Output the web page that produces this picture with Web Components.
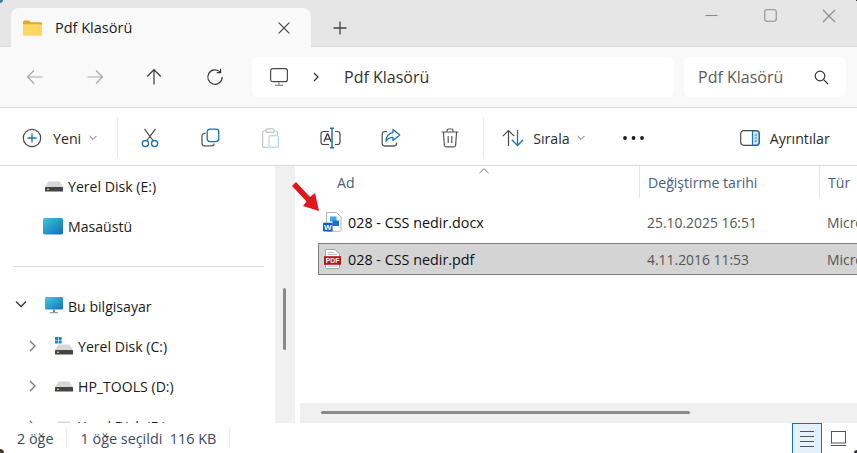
<!DOCTYPE html>
<html lang="tr">
<head>
<meta charset="utf-8">
<title>Pdf Klasörü</title>
<style>
  html, body { margin: 0; height: 100%; }
  body { width: 857px; height: 453px; overflow: hidden; font-family: "Open Sans", "Noto Sans", sans-serif; color: #1a1a1a; background: #fff; }
</style>
</head>
<body>
<explorer-window>
  <title-bar slot="top"></title-bar>
  <nav-bar slot="top"></nav-bar>
  <tool-bar slot="top"></tool-bar>
  <side-pane slot="left">
    <side-item icon="drive" indent="44">Yerel Disk (E:)</side-item>
    <side-item icon="desktop" indent="43" gap="5">Masaüstü</side-item>
    <side-divider></side-divider>
    <side-item icon="pc" indent="44" arrow="down" arrowx="15">Bu bilgisayar</side-item>
    <side-item icon="sysdrive" indent="54" arrow="right" arrowx="28">Yerel Disk (C:)</side-item>
    <side-item icon="drive" indent="54" arrow="right" arrowx="28">HP_TOOLS (D:)</side-item>
    <side-item icon="drive" indent="54" arrow="right" arrowx="28">Yerel Disk (E:)</side-item>
  </side-pane>
  <file-pane slot="right">
    <file-row icon="word" name="028 - CSS nedir.docx" date="25.10.2025 16:51" type="Microsoft Word Belgesi"></file-row>
    <file-row selected icon="pdf" name="028 - CSS nedir.pdf" date="4.11.2016 11:53" type="Microsoft Edge PDF"></file-row>
  </file-pane>
  <status-bar slot="bottom"></status-bar>
</explorer-window>

<script>
const ICONS = {
  back: '<svg width="18" height="18" viewBox="0 0 18 18" fill="none" stroke="#a9a9a9" stroke-width="1.2"><path d="M16.5 9H1.5M8 2.5 1.5 9 8 15.5"/></svg>',
  forward: '<svg width="18" height="18" viewBox="0 0 18 18" fill="none" stroke="#a9a9a9" stroke-width="1.2"><path d="M1.5 9h15M10 2.5 16.5 9 10 15.5"/></svg>',
  up: '<svg width="18" height="18" viewBox="0 0 18 18" fill="none" stroke="#3a3a3a" stroke-width="1.2"><path d="M9 16.5v-15M2.2 8.5 9 1.5l6.8 7"/></svg>',
  refresh: '<svg width="18" height="18" viewBox="0 0 18 18" fill="none" stroke="#3a3a3a" stroke-width="1.2"><path d="M14.3 4.2A7.2 7.2 0 1 0 16.2 9M14.6 .8v3.8h-3.8"/></svg>',
  monitor: '<svg width="20" height="20" viewBox="0 0 20 20" fill="none" stroke="#4a4a4a" stroke-width="1.2"><rect x="1.6" y="1.6" width="16.8" height="13" rx="2.2"/><path d="M6 18.4h8M10 15v3" stroke="#8a8a8a"/></svg>',
  crumb: '<svg width="8" height="10" viewBox="0 0 8 10" fill="none" stroke="#2e2e2e" stroke-width="1.2"><path d="M2 1l4 4-4 4"/></svg>',
  search: '<svg width="15" height="15" viewBox="0 0 15 15" fill="none" stroke="#333" stroke-width="1.2"><circle cx="6" cy="6" r="4.8"/><path d="M9.6 9.6l4.4 4.4"/></svg>',
  folder: '<svg width="19" height="16" viewBox="0 0 19 16"><path d="M0 2a1.5 1.5 0 0 1 1.5-1.5h4.6L8 2.2h11V6H0z" fill="#e9a825"/><path d="M0 4.2h17.5A1.5 1.5 0 0 1 19 5.7v8.8a1.2 1.2 0 0 1-1.2 1.2H1.2A1.2 1.2 0 0 1 0 14.5z" fill="#fdd663"/></svg>',
  x: '<svg width="12" height="12" viewBox="0 0 12 12" fill="none" stroke="#3a3a3a" stroke-width="1.1"><path d="M.7.7l10.6 10.6M11.3.7.7 11.3"/></svg>',
  plus: '<svg width="14" height="14" viewBox="0 0 14 14" fill="none" stroke="#444" stroke-width="1.3"><path d="M7 .5v13M.5 7h13"/></svg>',
  min: '<svg width="13" height="13" viewBox="0 0 13 13" fill="none" stroke="#8a8a8a" stroke-width="1.1"><path d="M.5 6.5h12"/></svg>',
  max: '<svg width="13" height="13" viewBox="0 0 13 13" fill="none" stroke="#8a8a8a" stroke-width="1.1"><rect x=".8" y=".8" width="11.4" height="11.4" rx="1.6"/></svg>',
  close: '<svg width="14" height="14" viewBox="0 0 14 14" fill="none" stroke="#8a8a8a" stroke-width="1.1"><path d="M1 1l12 12M13 1 1 13"/></svg>',
  newItem: '<svg width="20" height="20" viewBox="0 0 20 20" fill="none"><circle cx="10" cy="10" r="8.7" stroke="#4a4a4a" stroke-width="1.2"/><path d="M10 5.5v9M5.5 10h9" stroke="#1a73b8" stroke-width="1.3"/></svg>',
  cut: '<svg width="20" height="20" viewBox="0 0 20 20" fill="none"><path d="M3.5 .8 12.4 13M14.5 .8 5.6 13" stroke="#4a4a4a" stroke-width="1.2"/><circle cx="4.4" cy="15.6" r="3.1" stroke="#1a73b8" stroke-width="1.3"/><circle cx="13.6" cy="15.6" r="3.1" stroke="#1a73b8" stroke-width="1.3"/></svg>',
  copy: '<svg width="20" height="20" viewBox="0 0 20 20" fill="none"><path d="M4.6 5.4H3.4A2.4 2.4 0 0 0 1 7.8v7.4a2.6 2.6 0 0 0 2.6 2.6h7.2a2.4 2.4 0 0 0 2.4-2.2" stroke="#5a5a5a" stroke-width="1.3"/><rect x="6.2" y="1.2" width="11.6" height="12.4" rx="2.8" stroke="#1a73b8" stroke-width="1.3"/></svg>',
  paste: '<svg width="20" height="20" viewBox="0 0 20 20" fill="none"><path d="M5 3H3.2A1.6 1.6 0 0 0 1.6 4.6v13.2a1.6 1.6 0 0 0 1.6 1.6H7" stroke="#c4c4c4" stroke-width="1.2"/><path d="M13 3h1.8a1.6 1.6 0 0 1 1.6 1.6V7" stroke="#c4c4c4" stroke-width="1.2"/><rect x="5" y=".8" width="8" height="3.6" rx="1.2" stroke="#c4c4c4" stroke-width="1.2"/><rect x="8" y="7.6" width="9.4" height="11.8" rx="1.6" stroke="#b5d3ea" stroke-width="1.2"/></svg>',
  rename: '<svg width="22" height="22" viewBox="0 0 22 22" fill="none"><path d="M9 4.5H3.5A2.5 2.5 0 0 0 1 7v8a2.5 2.5 0 0 0 2.5 2.5H9M15 4.5h2.5A2.5 2.5 0 0 1 20 7v8a2.5 2.5 0 0 1-2.5 2.5H15" stroke="#4a4a4a" stroke-width="1.2"/><path d="M4 14.8 7.3 7h.6l3.2 7.8M5.1 12.2h5" stroke="#3a3a3a" stroke-width="1.3"/><path d="M10 1.2h4M12 1.2v19.6M10 20.8h4" stroke="#1a73b8" stroke-width="1.5"/></svg>',
  share: '<svg width="20" height="20" viewBox="0 0 20 20" fill="none"><path d="M6 3.6H3.6A2.4 2.4 0 0 0 1.2 6v9.6A2.4 2.4 0 0 0 3.6 18h9.6a2.4 2.4 0 0 0 2.4-2.4v-1.2" stroke="#5a5a5a" stroke-width="1.3"/><path d="M12 1.4l6.8 5.6-6.8 5.6V9.4c-3.4 0-5.4 1.2-7 3.8C5 9 7.6 5 12 4.6z" stroke="#1a73b8" stroke-width="1.3" stroke-linejoin="round"/></svg>',
  trash: '<svg width="18" height="20" viewBox="0 0 18 20" fill="none" stroke="#555" stroke-width="1.2"><path d="M.6 4h16.8M6 4V2.6A1.6 1.6 0 0 1 7.6 1h2.8A1.6 1.6 0 0 1 12 2.6V4M2.4 4l1 13.2a1.8 1.8 0 0 0 1.8 1.6h7.6a1.8 1.8 0 0 0 1.8-1.6L15.6 4M7.2 8v7M10.8 8v7"/></svg>',
  sort: '<svg width="22" height="18" viewBox="0 0 22 18" fill="none"><path d="M6.5 17V1.5M.8 7.2 6.5 1.5l5.7 5.7" stroke="#4a4a4a" stroke-width="1.2"/><path d="M15.5 1v15.5M9.8 10.8l5.7 5.7 5.7-5.7" stroke="#1a73b8" stroke-width="1.3"/></svg>',
  chev: '<svg width="8" height="6" viewBox="0 0 8 6" fill="none" stroke="#6a6a6a" stroke-width="1"><path d="M.6 1 4 4.4 7.4 1"/></svg>',
  more: '<svg width="21" height="4" viewBox="0 0 21 4" fill="#1c1c1c"><circle cx="2" cy="2" r="1.9"/><circle cx="10.5" cy="2" r="1.9"/><circle cx="19" cy="2" r="1.9"/></svg>',
  details: '<svg width="20" height="16" viewBox="0 0 20 16" fill="none"><rect x=".7" y=".7" width="18.6" height="14.6" rx="3" stroke="#4a4a4a" stroke-width="1.2"/><path d="M12.5 1h4A2.6 2.6 0 0 1 19 3.6v8.8a2.6 2.6 0 0 1-2.5 2.6h-4z" fill="#d6e9f7" stroke="#1a73b8" stroke-width="1.2"/><path d="M14.6 5h2.4M14.6 8h2.4M14.6 11h2.4" stroke="#1a73b8"/></svg>',
  drive: '<svg width="18" height="14" viewBox="0 0 18 14"><path d="M3.5 2.5h11L18 8H0z" fill="#d7d7d7"/><rect y="8" width="18" height="4.6" rx=".6" fill="#444"/><rect x="2" y="9.6" width="2" height="1.4" fill="#9fd66b"/></svg>',
  sysdrive: '<svg width="18" height="19" viewBox="0 0 18 19"><path d="M3.5 7.5h11L18 13H0z" fill="#d7d7d7"/><rect y="13" width="18" height="4.6" rx=".6" fill="#444"/><rect x="2" y="14.6" width="2" height="1.4" fill="#9fd66b"/><path d="M0 0h3v3H0zM3.6 0h3v3h-3zM0 3.6h3v3H0zM3.6 3.6h3v3h-3z" fill="#1a86d0"/></svg>',
  desktop: '<svg width="20" height="17" viewBox="0 0 20 17"><defs><linearGradient id="dk" x1="0" y1="0" x2="1" y2="1"><stop offset="0" stop-color="#3fc3dd"/><stop offset="1" stop-color="#0f6fb8"/></linearGradient></defs><rect width="20" height="16.4" rx="1.6" fill="url(#dk)"/></svg>',
  pc: '<svg width="18" height="18" viewBox="0 0 18 18"><defs><linearGradient id="pcg" x1="0" y1="0" x2="1" y2="1"><stop offset="0" stop-color="#46c8e0"/><stop offset="1" stop-color="#1272b8"/></linearGradient></defs><rect width="18" height="12.6" rx="1" fill="url(#pcg)"/><path d="M8 12.6h2v2.4H8z" fill="#6f8594"/><path d="M5 15h8v1.2H5z" fill="#8e9ca6"/></svg>',
  word: '<svg width="19" height="20" viewBox="0 0 19 20"><path d="M3.5.5h10l4.5 4.5v13a1.3 1.3 0 0 1-1.3 1.3H4.8A1.3 1.3 0 0 1 3.5 18z" fill="#fff" stroke="#b5b5b5"/><path d="M7 4.5h6.5v5H7z" fill="#41a5ee"/><path d="M9.5 8.5h6.5v5.5H9.5z" fill="#1f6fc4"/><rect y="10.8" width="9.6" height="8.8" rx="1" fill="#185abd"/><text x="4.8" y="18" text-anchor="middle" font-family="Liberation Sans" font-size="8" font-weight="700" fill="#fff">W</text></svg>',
  pdf: '<svg width="19" height="20" viewBox="0 0 18 20"><path d="M2 .5h9.5L16 5v13.2a1.3 1.3 0 0 1-1.3 1.3H3.3A1.3 1.3 0 0 1 2 18.2z" fill="#fff" stroke="#a5a5a5"/><path d="M4.5 3.6h6M4.5 5.6h9" stroke="#b5b5b5"/><rect x=".5" y="7.2" width="17" height="8.6" fill="#b8131f"/><text x="9" y="14" text-anchor="middle" font-family="Liberation Sans" font-size="6.8" font-weight="700" fill="#fff">PDF</text><path d="M4.5 17.4h9" stroke="#c9c9c9"/></svg>',
  list: '<svg width="14" height="17" viewBox="0 0 14 17" fill="none" stroke="#555" stroke-width="1"><path d="M0 1.5h14M0 6.5h14M0 11.5h14M0 16.5h14"/></svg>',
  tiles: '<svg width="15" height="15" viewBox="0 0 15 15" fill="none" stroke="#555" stroke-width="1"><rect x=".5" y=".5" width="14" height="11.5"/><path d="M0 14.5h15"/></svg>',
  arrow: '<svg width="34" height="36" viewBox="0 0 34 36"><path d="M4 8 8 4 22 19 27 15 31 33 15 28 18.5 23.5z" fill="#e2171d"/></svg>',
  sideRight: '<svg width="9" height="12" viewBox="0 0 9 12" fill="none" stroke="#777" stroke-width="1.3"><path d="M2 1l5 5-5 5"/></svg>',
  sideDown: '<svg width="12" height="9" viewBox="0 0 12 9" fill="none" stroke="#333" stroke-width="1.3"><path d="M1 1.5l5 5 5-5"/></svg>',
};

class ExplorerWindow extends HTMLElement {
  constructor() {
    super();
    this.attachShadow({ mode: "open" });
    this.shadowRoot.innerHTML = `
      <style>
        :host { position: relative; display: flex; flex-direction: column; width: 857px; height: 453px; overflow: hidden; }
        .middle { display: flex; height: 257px; overflow: hidden; }
        .gutter { display: block; width: 20px; flex: none; background: #f0f0f0; padding: 122px 0 0 8px; box-sizing: border-box; }
        .gutter i { display: block; width: 3px; height: 62px; background: #8a8a8a; border-radius: 2px; }
        .corner { position: absolute; display: block; }
      </style>
      <slot name="top"></slot>
      <div class="middle">
        <slot name="left"></slot>
        <div class="gutter"><i></i></div>
        <slot name="right"></slot>
      </div>
      <slot name="bottom"></slot>
      <span class="corner" style="left:0;top:0;width:3px;height:3px;background:#3d7fb5;border-radius:0 0 3px 0"></span>
      <span class="corner" style="left:0;bottom:0;width:4px;height:4px;background:#4a3a2c;border-radius:0 4px 0 0"></span>
      <span class="corner" style="right:0;bottom:0;width:3px;height:3px;background:#2c3440;border-radius:3px 0 0 0"></span>
      <span class="corner" style="right:0;top:0;width:1px;height:1px;background:#333"></span>
    `;
  }
}

class TitleBar extends HTMLElement {
  constructor() {
    super();
    this.attachShadow({ mode: "open" });
    this.shadowRoot.innerHTML = `
      <style>
        :host { display: flex; height: 47px; box-sizing: border-box; background: #e6e6e6; border-bottom: 1px solid #d9d9d9; padding-left: 11px; }
        .tab { display: flex; align-items: center; width: 300px; height: 39px; margin-top: 8px; box-sizing: border-box; padding: 0 21px 0 12px; background: #f9f9f9; border-radius: 8px 8px 0 0; font-size: 14.5px; font-weight: 500; color: #1a1a1a; }
        .tab span { flex: 1; margin-left: 13px; }
        .plus { margin: 21px 0 0 22px; line-height: 0; }
        .controls { margin-left: auto; margin-right: -1px; display: flex; }
        .controls b { display: flex; justify-content: center; width: 58.5px; padding-top: 9px; height: 14px; line-height: 0; }
        svg { display: block; }
      </style>
      <div class="tab">${ICONS.folder}<span>Pdf Klasörü</span>${ICONS.x}</div>
      <div class="plus">${ICONS.plus}</div>
      <div class="controls"><b>${ICONS.min}</b><b>${ICONS.max}</b><b>${ICONS.close}</b></div>
    `;
  }
}

class NavBar extends HTMLElement {
  constructor() {
    super();
    this.attachShadow({ mode: "open" });
    this.shadowRoot.innerHTML = `
      <style>
        :host { display: flex; align-items: center; height: 61px; box-sizing: border-box; background: #f9f9f9; border-bottom: 1px solid #d9d9d9; padding: 0 11px 0 5px; }
        .btn { display: flex; justify-content: center; width: 60px; line-height: 0; }
        .box { display: flex; align-items: center; height: 40px; background: #fff; border-radius: 6px; font-size: 16px; color: #333; }
        .addr { width: 422px; margin-left: 7px; padding-left: 17px; box-sizing: border-box; }
        .addr .c { margin: 0 24px 0 23px; line-height: 0; }
        .find { width: 162px; margin-left: 10px; padding: 0 17px 0 14px; box-sizing: border-box; color: #5c5c5c; justify-content: space-between; }
        svg { display: block; }
      </style>
      <div class="btn">${ICONS.back}</div>
      <div class="btn">${ICONS.forward}</div>
      <div class="btn" style="margin-left:-1px;margin-right:1px">${ICONS.up}</div>
      <div class="btn">${ICONS.refresh}</div>
      <div class="box addr">${ICONS.monitor}<span class="c">${ICONS.crumb}</span><span>Pdf Klasörü</span></div>
      <div class="box find"><span>Pdf Klasörü</span>${ICONS.search}</div>
    `;
  }
}

class ToolBar extends HTMLElement {
  constructor() {
    super();
    this.attachShadow({ mode: "open" });
    this.shadowRoot.innerHTML = `
      <style>
        :host { display: flex; align-items: center; height: 58px; box-sizing: border-box; background: #fff; border-bottom: 1px solid #d9d9d9; padding: 3px 0 0 22px; font-size: 14.2px; color: #2a2a2a; }
        .lbl { display: flex; align-items: center; }
        .sep { width: 1px; height: 40px; background: #e8e8e8; }
        .ic { display: flex; justify-content: center; width: 60px; line-height: 0; }
        .chev { line-height: 0; }
        svg { display: block; }
      </style>
      <div class="lbl">${ICONS.newItem}<span style="margin-left:11px">Yeni</span><span class="chev" style="margin-left:8px">${ICONS.chev}</span></div>
      <div class="sep" style="margin-left:20px"></div>
      <div class="ic" style="margin-left:3px">${ICONS.cut}</div>
      <div class="ic">${ICONS.copy}</div>
      <div class="ic">${ICONS.paste}</div>
      <div class="ic">${ICONS.rename}</div>
      <div class="ic">${ICONS.share}</div>
      <div class="ic" style="margin-left:-1px;margin-right:1px">${ICONS.trash}</div>
      <div class="sep" style="margin-left:2px"></div>
      <div class="lbl" style="margin-left:18px">${ICONS.sort}<span style="margin-left:9px">Sırala</span><span class="chev" style="margin-left:7px">${ICONS.chev}</span></div>
      <div style="margin-left:38px;line-height:0">${ICONS.more}</div>
      <div class="lbl" style="margin-left:96px">${ICONS.details}<span style="margin-left:10px">Ayrıntılar</span></div>
    `;
  }
}

class SidePane extends HTMLElement {
  constructor() {
    super();
    this.attachShadow({ mode: "open" });
    this.shadowRoot.innerHTML = `
      <style>
        :host { display: block; width: 275px; flex: none; box-sizing: border-box; background: #fff; }
      </style>
      <slot></slot>
    `;
  }
}

class SideItem extends HTMLElement {
  constructor() {
    super();
    this.attachShadow({ mode: "open" });
  }
  connectedCallback() {
    const arrow = this.getAttribute("arrow");
    const glyph = arrow === "down" ? ICONS.sideDown : arrow === "right" ? ICONS.sideRight : "";
    this.shadowRoot.innerHTML = `
      <style>
        :host { display: block; height: 40px; }
        .row { position: relative; display: flex; align-items: center; height: 40px; box-sizing: border-box; padding-left: ${this.getAttribute("indent")}px; font-size: 14.1px; color: #1a1a1a; }
        .arr { position: absolute; left: ${this.getAttribute("arrowx") || 0}px; top: 14px; line-height: 0; }
        .icon { display: flex; justify-content: center; align-items: flex-end; width: 20px; margin-right: ${this.getAttribute("gap") || 4}px; line-height: 0; }
        svg { display: block; }
      </style>
      <div class="row"><span class="arr">${glyph}</span><span class="icon">${ICONS[this.getAttribute("icon")]}</span><slot></slot></div>
    `;
  }
}

class SideDivider extends HTMLElement {
  constructor() {
    super();
    this.attachShadow({ mode: "open" });
    this.shadowRoot.innerHTML = `
      <style>
        :host { display: flex; align-items: center; height: 40px; padding: 0 11px 0 13px; }
        i { display: block; width: 100%; height: 1px; background: #d9d9d9; }
      </style>
      <i></i>
    `;
  }
}

class FilePane extends HTMLElement {
  constructor() {
    super();
    this.attachShadow({ mode: "open" });
    this.shadowRoot.innerHTML = `
      <style>
        :host { position: relative; display: flex; flex-direction: column; flex: 1; min-width: 0; background: #fff; }
        .head { display: grid; grid-template-columns: 344px 180px 1fr; height: 38px; font-size: 14.1px; color: #4c607a; flex: none; position: relative; }
        .head div { height: 32px; padding: 8px 0 0 8px; box-sizing: border-box; line-height: 18px; }
        .head div + div { border-left: 1px solid #e5e5e5; }
        .head div:first-child { padding-left: 42px; }
        .sort { position: absolute; left: 184px; top: 2px; line-height: 0; }
        .rows { flex: 1; padding-left: 23px; min-height: 0; }
        .bar { flex: none; height: 20px; background: #f0f0f0; margin-left: 5px; padding: 8px 0 0 21px; box-sizing: border-box; }
        .bar i { display: block; width: 369px; height: 3px; background: #8a8a8a; border-radius: 2px; }
        .arrow { position: absolute; left: -7px; top: 12px; line-height: 0; }
        svg { display: block; }
      </style>
      <div class="head">
        <div>Ad</div><div>Değiştirme tarihi</div><div>Tür</div>
        <span class="sort"><svg width="10" height="6" viewBox="0 0 10 6" fill="none" stroke="#777"><path d="M.5 5 5 .8 9.5 5"/></svg></span>
      </div>
      <div class="rows"><slot></slot></div>
      <div class="bar"><i></i></div>
      <span class="arrow">${ICONS.arrow}</span>
    `;
  }
}

class FileRow extends HTMLElement {
  constructor() {
    super();
    this.attachShadow({ mode: "open" });
  }
  connectedCallback() {
    const sel = this.hasAttribute("selected");
    this.shadowRoot.innerHTML = `
      <style>
        :host { display: block; margin-bottom: ${sel ? 0 : 3}px; }
        .row { display: grid; grid-template-columns: 328px 180px 1fr; align-items: center; height: ${sel ? 32 : 36}px; box-sizing: border-box; font-size: 14.35px; color: #111; white-space: nowrap; overflow: hidden; ${sel ? "background: #d4d4d4; border: 1px solid #7f7f7f; border-right: 0;" : "border: 1px solid transparent; border-right: 0;"} }
        .name { display: flex; align-items: center; padding-left: 4px; gap: 6px; }
        .meta { color: #555; font-size: 13.9px; }
        svg { display: block; }
      </style>
      <div class="row">
        <div class="name">${ICONS[this.getAttribute("icon")]}<span>${this.getAttribute("name")}</span></div>
        <div class="meta">${this.getAttribute("date")}</div>
        <div class="meta">${this.getAttribute("type")}</div>
      </div>
    `;
  }
}

class StatusBar extends HTMLElement {
  constructor() {
    super();
    this.attachShadow({ mode: "open" });
    this.shadowRoot.innerHTML = `
      <style>
        :host { display: flex; align-items: center; height: 30px; background: #fff; font-size: 14.4px; color: #3b4a5f; padding-left: 17px; }
        .sep { width: 1px; height: 20px; background: #e8e8e8; }
        .views { margin-left: auto; display: flex; align-self: stretch; padding-right: 4px; }
        .views div { display: flex; align-items: center; justify-content: center; width: 30px; box-sizing: border-box; line-height: 0; }
        .on { background: #e5f1fa; border: 1px solid #1a6fa8; border-bottom: 0; }
        .off { margin-left: 1px; }
        svg { display: block; }
      </style>
      <span>2 öğe</span>
      <span class="sep" style="margin:0 14px 0 12px"></span>
      <span>1 öğe seçildi&nbsp; 116 KB</span>
      <span class="sep" style="margin-left:13px"></span>
      <div class="views"><div class="on">${ICONS.list}</div><div class="off">${ICONS.tiles}</div></div>
    `;
  }
}

customElements.define("explorer-window", ExplorerWindow);
customElements.define("title-bar", TitleBar);
customElements.define("nav-bar", NavBar);
customElements.define("tool-bar", ToolBar);
customElements.define("side-pane", SidePane);
customElements.define("side-item", SideItem);
customElements.define("side-divider", SideDivider);
customElements.define("file-pane", FilePane);
customElements.define("file-row", FileRow);
customElements.define("status-bar", StatusBar);
</script>
</body>
</html>
